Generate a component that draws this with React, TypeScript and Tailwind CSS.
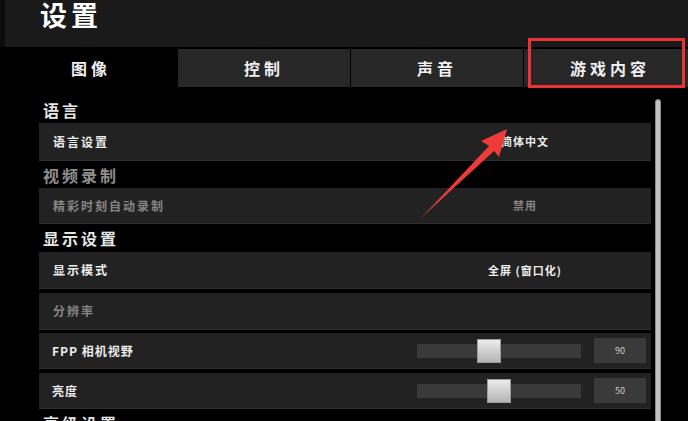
const font = {
  fontFamily: '"Noto Sans CJK SC", "Noto Sans", sans-serif',
};

const tabs = ["图像", "控制", "声音", "游戏内容"];

function Heading({ text, dim, h }: { text: string; dim?: boolean; h: string }) {
  return (
    <div
      className={`${h} flex items-center pl-[4px] text-[16px] font-bold tracking-[3px] ${
        dim ? "text-[#8e8e8e]" : "text-[#e6e6e6]"
      }`}
    >
      {text}
    </div>
  );
}

function Row({
  label,
  value,
  dim,
  h,
}: {
  label: string;
  value?: string;
  dim?: boolean;
  h: string;
}) {
  return (
    <div className={`${h} flex items-center bg-[#222222] border-b border-[#2e2e2e]`}>
      <div
        className={`flex-1 pl-[14px] text-[12px] font-bold tracking-[2px] ${
          dim ? "text-[#858585]" : "text-[#ececec]"
        }`}
      >
        {label}
      </div>
      {value && (
        <div
          className={`w-[172px] mr-[40px] text-center text-[11px] font-bold tracking-[1px] ${
            dim ? "text-[#858585]" : "text-[#ececec]"
          }`}
        >
          {value}
        </div>
      )}
    </div>
  );
}

function SliderRow({
  label,
  value,
  thumb,
  h,
}: {
  label: string;
  value: string;
  thumb: string;
  h: string;
}) {
  return (
    <div className={`${h} flex items-center bg-[#222222] border-b border-[#2e2e2e]`}>
      <div className="flex-1 pl-[13px] text-[12px] font-bold tracking-[1px] text-[#ececec]">
        {label}
      </div>
      <div className="relative w-[164px] h-[14px] bg-[#3a3a3a]">
        <div
          className={`absolute top-[-5px] ${thumb} w-[24px] h-[24px] bg-gradient-to-b from-[#ececec] to-[#b4b4b4] border border-[#9a9a9a]`}
        />
      </div>
      <div className="ml-[13px] mr-[5px] w-[52px] h-[25px] bg-[#3a3a3a] flex items-center justify-center text-[9px] text-[#cfcfcf]">
        {value}
      </div>
    </div>
  );
}

export default function App() {
  return (
    <div
      className="relative w-[688px] h-[421px] overflow-hidden bg-black"
      style={font}
    >
      {/* Header */}
      <div className="h-[47px] bg-[#1a1a1a] border-l-[5px] border-[#0c0c0c] pl-[35px]">
        <div className="text-[27px] leading-[30px] font-bold tracking-[4px] text-white">
          设置
        </div>
      </div>

      {/* Tabs */}
      <div className="h-[40px] flex gap-[1px] pl-[5px] pt-[2px]">
        {tabs.map((t, i) => (
          <div
            key={t}
            className={`w-[172px] shrink-0 flex items-center justify-center text-[16px] font-bold tracking-[4px] text-[#f0f0f0] ${
              i === 0 ? "bg-black" : "bg-[#272727]"
            }`}
          >
            {t}
          </div>
        ))}
      </div>

      {/* Content */}
      <div className="flex">
        <div className="ml-[39px] w-[612px] pt-[10px] flex flex-col">
          <Heading text="语言" h="h-[26px]" />
          <Row label="语言设置" value="简体中文" h="h-[38px]" />
          <Heading text="视频录制" dim h="h-[27px]" />
          <Row label="精彩时刻自动录制" value="禁用" dim h="h-[36px]" />
          <Heading text="显示设置" h="h-[28px]" />
          <Row label="显示模式" value="全屏 (窗口化)" h="h-[37px]" />
          <div className="h-[4px]" />
          <Row label="分辨率" dim h="h-[37px]" />
          <div className="h-[3px]" />
          <SliderRow label="FPP 相机视野" value="90" thumb="left-[60px]" h="h-[36px]" />
          <div className="h-[4px]" />
          <SliderRow label="亮度" value="50" thumb="left-[70px]" h="h-[36px]" />
          <Heading text="高级设置" h="h-[28px]" />
        </div>
        <div className="ml-[4px] mt-[12px] w-[6px] h-[340px] rounded-t-[3px] bg-[#c2c2c2] border border-[#8a8a8a]" />
      </div>

      {/* Red annotation box around 游戏内容 */}
      <div className="absolute left-[528px] top-[38px] w-[157px] h-[50px] border-[3px] border-[#ec3237]" />

      {/* Red annotation arrow */}
      <svg
        className="absolute left-0 top-0 pointer-events-none"
        width="688"
        height="421"
        viewBox="0 0 688 421"
      >
        <polygon
          points="507,129 481,141 489,146 421,218 494,151 499,157"
          fill="#ef3a3a"
        />
      </svg>
    </div>
  );
}
